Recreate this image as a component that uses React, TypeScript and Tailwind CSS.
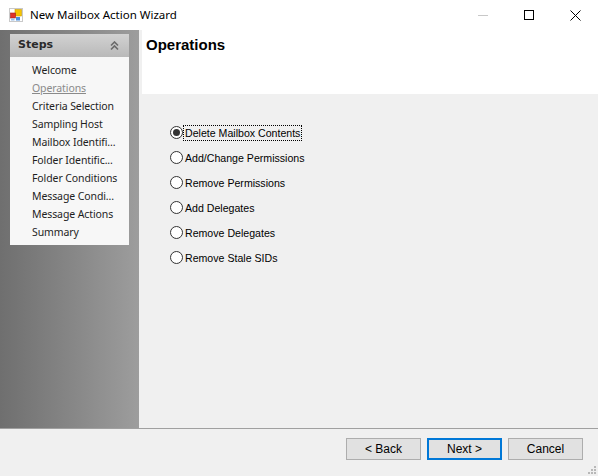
import { useState } from 'react';

const steps = [
  'Welcome',
  'Operations',
  'Criteria Selection',
  'Sampling Host',
  'Mailbox Identifi...',
  'Folder Identific...',
  'Folder Conditions',
  'Message Condi...',
  'Message Actions',
  'Summary',
];

const operations = [
  'Delete Mailbox Contents',
  'Add/Change Permissions',
  'Remove Permissions',
  'Add Delegates',
  'Remove Delegates',
  'Remove Stale SIDs',
];

function AppIcon() {
  return (
    <svg width="14" height="14" viewBox="0 0 14 14" className="shrink-0">
      <rect x="0.5" y="0.5" width="13" height="13" fill="#fff" stroke="#c9c9c9" />
      <rect x="6" y="1.5" width="6.5" height="6.5" fill="#f5c400" stroke="#c79a00" strokeWidth="0.6" />
      <rect x="1.5" y="5" width="5" height="5" fill="#e0322a" stroke="#a01f18" strokeWidth="0.6" />
      <rect x="7" y="9" width="4" height="3.5" fill="#4a8fe0" />
      <rect x="2" y="10.5" width="3.5" height="2" fill="#9ac0ea" />
    </svg>
  );
}

function Radio({ checked }: { checked: boolean }) {
  return (
    <svg width="13" height="13" viewBox="0 0 13 13" className="shrink-0">
      <circle cx="6.5" cy="6.5" r="6" fill="#fff" stroke="#333" strokeWidth="1" />
      {checked && <circle cx="6.5" cy="6.5" r="3.5" fill="#333" />}
    </svg>
  );
}

export default function App() {
  const [selected, setSelected] = useState(0);

  return (
    <div
      className="w-[598px] h-[476px] flex flex-col bg-[#f0f0f0] overflow-hidden"
      style={{ fontFamily: '"Liberation Sans", Arial, sans-serif' }}
    >
      {/* Title bar */}
      <div className="h-[30px] bg-white flex items-center shrink-0">
        <div className="pl-[9px] pr-[7px]">
          <AppIcon />
        </div>
        <span className="text-[11.5px] text-black" style={{ fontFamily: '"Noto Sans", sans-serif' }}>
          New Mailbox Action Wizard
        </span>
        <div className="ml-auto flex h-full">
          <div className="w-[46px] flex items-center justify-center">
            <div className="w-[10px] h-px bg-[#c8c8c8]" />
          </div>
          <div className="w-[46px] flex items-center justify-center">
            <div className="w-[10px] h-[10px] border border-black" />
          </div>
          <div className="w-[46px] flex items-center justify-center">
            <svg width="11" height="11" viewBox="0 0 11 11">
              <path d="M0.5 0.5 L10.5 10.5 M10.5 0.5 L0.5 10.5" stroke="#000" strokeWidth="1" />
            </svg>
          </div>
        </div>
      </div>

      <div className="flex flex-1 min-h-0">
        {/* Sidebar */}
        <div className="w-[139px] shrink-0 bg-gradient-to-r from-[#6f6f6f] to-[#9d9d9d] pt-[4px] px-[10px]">
          <div className="bg-[#f7f7f7]">
            <div className="h-[23px] bg-gradient-to-b from-[#d2d2d2] to-[#b9b9b9] flex items-center justify-between pl-[8px] pr-[10px]">
              <span
                className="text-[11px] font-bold text-[#2a2a2a]"
                style={{ fontFamily: 'Tahoma, "DejaVu Sans", sans-serif' }}
              >
                Steps
              </span>
              <svg width="9" height="10" viewBox="0 0 9 10">
                <path d="M1 4.5 L4.5 1 L8 4.5 M1 8.5 L4.5 5 L8 8.5" stroke="#6a6a6a" strokeWidth="1.6" fill="none" />
              </svg>
            </div>
            <ul className="pt-[4px] pb-[4px]" style={{ fontFamily: '"Noto Sans", sans-serif' }}>
              {steps.map((s, i) => (
                <li
                  key={s}
                  className={`h-[18px] leading-[18px] pl-[22px] text-[10.5px] tracking-[-0.1px] whitespace-nowrap ${
                    i === 1 ? 'text-[#8a8a8a] underline' : 'text-[#1e1e1e]'
                  }`}
                >
                  {s}
                </li>
              ))}
            </ul>
          </div>
        </div>

        {/* Main */}
        <div className="flex-1 flex flex-col">
          <div className="h-[64px] bg-white ml-[3px] pl-[4px] pt-[4px]">
            <h1
              className="text-[15px] font-bold text-black"
              style={{ fontFamily: '"Liberation Sans", Arial, sans-serif' }}
            >
              Operations
            </h1>
          </div>
          <div className="pl-[31px] pt-[32px] flex flex-col gap-[12px]">
            {operations.map((op, i) => (
              <label
                key={op}
                className="flex items-center gap-px h-[13px] text-[10.6px] text-black cursor-default"
                onClick={() => setSelected(i)}
              >
                <Radio checked={selected === i} />
                <span
                  className={`px-px leading-[14px] ${
                    selected === i ? 'outline outline-1 outline-dotted outline-black' : ''
                  }`}
                >
                  {op}
                </span>
              </label>
            ))}
          </div>
        </div>
      </div>

      {/* Footer */}
      <div className="h-[48px] shrink-0 border-t border-[#a0a0a0] relative flex items-start justify-end pt-[9px] pr-[15px] gap-[6px] text-[12px]">
        <button className="w-[75px] h-[22px] bg-[#e1e1e1] border border-[#adadad] text-black">&lt; Back</button>
        <button className="w-[75px] h-[22px] bg-[#e1e1e1] border-2 border-[#0078d7] text-black">Next &gt;</button>
        <button className="w-[75px] h-[22px] bg-[#e1e1e1] border border-[#adadad] text-black">Cancel</button>
        <svg width="10" height="10" viewBox="0 0 10 10" className="absolute right-[2px] bottom-[2px]">
          <g fill="#b8b8b8">
            <rect x="8" y="2" width="2" height="2" />
            <rect x="5" y="5" width="2" height="2" />
            <rect x="8" y="5" width="2" height="2" />
            <rect x="2" y="8" width="2" height="2" />
            <rect x="5" y="8" width="2" height="2" />
            <rect x="8" y="8" width="2" height="2" />
          </g>
        </svg>
      </div>
    </div>
  );
}
